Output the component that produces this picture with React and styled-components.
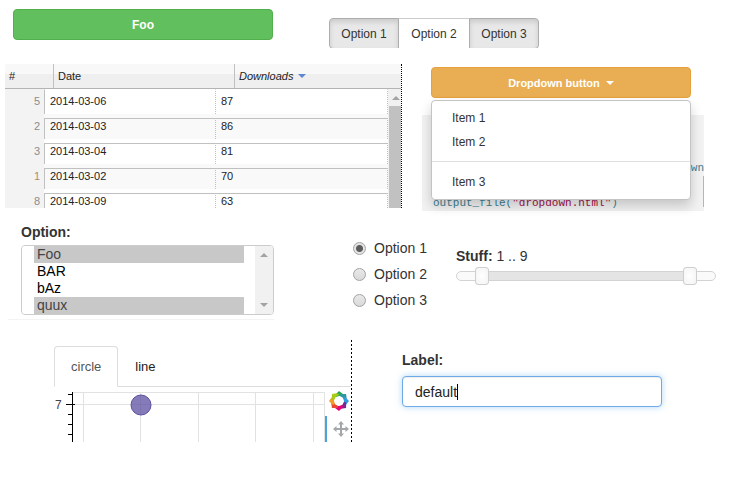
import React, { useState } from "react";
import styled, { createGlobalStyle } from "styled-components";

const GlobalStyle = createGlobalStyle`
  *, *::before, *::after { box-sizing: border-box; }
  body {
    margin: 0;
    background: #fff;
    color: #333;
    font-family: "Liberation Sans", Arial, sans-serif;
    font-size: 14px;
  }
  button, input, select { font-family: inherit; }
`;

const Page = styled.main`
  padding: 9px 0 36px;
`;

const Row = styled.section`
  display: grid;
  align-items: start;
  grid-template-columns: ${(p) => p.$columns};
  column-gap: ${(p) => p.$gap}px;
  padding-left: ${(p) => p.$indent}px;
  padding-right: ${(p) => p.$end || 0}px;
  margin-bottom: ${(p) => p.$after || 0}px;
`;

const SolidButton = styled.button`
  display: flex;
  align-items: center;
  justify-content: center;
  gap: 6px;
  width: 100%;
  height: 31px;
  padding: 0 12px;
  border: 1px solid ${(p) => (p.$tone === "success" ? "#52b04c" : "#e6a03c")};
  border-radius: 4px;
  background: ${(p) => (p.$tone === "success" ? "#62bf5d" : "#e9ae53")};
  color: #fff;
  font-size: ${(p) => (p.$tone === "success" ? 12 : 11)}px;
  font-weight: bold;
`;

const Caret = styled.span`
  border-top: 4px solid currentColor;
  border-left: 4px solid transparent;
  border-right: 4px solid transparent;
`;

const Group = styled.div`
  display: grid;
  grid-template-columns: 1fr 1fr 1fr;
  height: 30px;
  margin-top: 9px;
  overflow: hidden;
`;

const Segment = styled.button`
  height: 31px;
  padding: 0;
  border: 1px solid ${(p) => (p.$active ? "#adadad" : "#ccc")};
  border-left-width: ${(p) => (p.$first || p.$last ? 1 : 0)}px;
  border-right-width: ${(p) => (p.$first || p.$last ? 1 : 0)}px;
  border-radius: ${(p) => (p.$first ? "4px 0 0 4px" : p.$last ? "0 4px 4px 0" : "0")};
  background: ${(p) => (p.$active ? "#e8e8e8" : "#fff")};
  box-shadow: ${(p) => (p.$active ? "inset 0 3px 5px rgba(0, 0, 0, 0.125)" : "none")};
  color: #333;
  font-size: 12px;
`;

const GridFrame = styled.div`
  display: flex;
  flex-direction: column;
  height: 144px;
  overflow: hidden;
  border-right: 1px dotted #000;
  position: relative;
`;

const DataTable = styled.table`
  display: block;
  font-size: 11px;
  color: #222;
`;

const TableHead = styled.thead`
  display: block;
`;

const HeadRow = styled.tr`
  display: grid;
  grid-template-columns: 49fr 181fr 166fr;
  height: 25px;
  border-bottom: 1px solid #b4b4b4;
  background: linear-gradient(#f8f8f8 0 40%, #efeff0 42% 100%);
`;

const HeadCell = styled.th`
  display: flex;
  align-items: center;
  gap: 5px;
  padding: 0 4px;
  border-right: ${(p) => (p.$last ? 0 : 1)}px solid silver;
  font-weight: normal;
  font-style: ${(p) => (p.$sorted ? "italic" : "normal")};
`;

const SortArrow = styled.span`
  border-top: 4px solid #6085d0;
  border-left: 4px solid transparent;
  border-right: 4px solid transparent;
`;

const TableBody = styled.tbody`
  display: block;
  margin-right: 13px;
`;

const BodyRow = styled.tr`
  display: grid;
  grid-template-columns: 39fr 172fr 172fr;
  height: 25px;
  background: ${(p) => (p.$odd ? "#f9f9f9" : "#fff")};
`;

const IndexCell = styled.th`
  padding: 0 4px 0 0;
  background: #f3f3f3;
  color: ${(p) => (p.$warm ? "#b08a70" : "#8c8c8c")};
  font-weight: normal;
  line-height: 25px;
  text-align: right;
`;

const Cell = styled.td`
  margin-top: ${(p) => (p.$top ? 0 : 4)}px;
  padding: ${(p) => (p.$top ? 4 : 0)}px 5px 0;
  border-top: 1px solid ${(p) => (p.$top ? "transparent" : "silver")};
  border-left: ${(p) => (p.$leading ? 1 : 0)}px solid silver;
  border-right: 1px dotted silver;
  line-height: 15px;
`;

const ScrollTrack = styled.div`
  position: absolute;
  top: 25px;
  right: 0;
  bottom: 0;
  width: 13px;
  padding-left: 1px;
  background: #f1f1f1;
`;

const ScrollArrow = styled.svg`
  display: block;
  width: 12px;
  height: 17px;
  fill: #a3a3a3;
`;

const ScrollThumb = styled.div`
  height: 100%;
  background: #c1c1c1;
`;

const Dropdown = styled.div`
  position: relative;
  padding: 3px 13px 0 9px;
`;

const Menu = styled.ul`
  position: absolute;
  top: 36px;
  left: 9px;
  right: 13px;
  margin: 0;
  padding: 5px 0;
  list-style: none;
  border: 1px solid #c4c4c4;
  border-radius: 4px;
  background: #fff;
  box-shadow: 0 6px 12px rgba(0, 0, 0, 0.18);
`;

const MenuItem = styled.li`
  ${(p) => p.$divided && "margin-top: 7px; padding-top: 8px; border-top: 1px solid #e0e0e0;"}
`;

const MenuLink = styled.a`
  display: block;
  padding: 0 20px;
  color: #333;
  font-size: 12px;
  line-height: 24px;
  text-decoration: none;
`;

const CodeBlock = styled.pre`
  height: 96px;
  margin: 17px -13px 0 -9px;
  padding: 44px 0 0 11px;
  overflow: hidden;
  background: linear-gradient(#e9ae53, #e9ae53) right 61px / 1px 31px no-repeat, #f2f2f2;
  color: #408090;
  font-family: "Liberation Mono", monospace;
  font-size: 11px;
  line-height: 18px;
`;

const CodeLine = styled.code`
  display: block;
  font-family: inherit;
  text-align: ${(p) => (p.$end ? "right" : "left")};
  margin-bottom: ${(p) => (p.$end ? 17 : 0)}px;
`;

const CodeString = styled.span`
  color: #a0104a;
`;

const FieldLabel = styled.label`
  display: block;
  color: #333;
  font-weight: bold;
  line-height: 16px;
`;

const OptionPanel = styled.div`
  max-width: 266px;
  margin-left: -13px;
  padding-left: 13px;
  border-bottom: 1px solid #f3f3f3;
  height: 96px;
`;

const SelectFrame = styled.div`
  display: flex;
  width: 100%;
  height: 70px;
  margin-top: 5px;
  border: 1px solid #ccc;
  border-radius: 4px;
  overflow: hidden;
`;

const MultiSelect = styled.select`
  flex: 1;
  min-width: 0;
  height: 68px;
  margin: 0;
  padding: 0 11px 0 12px;
  border: 0;
  outline: 0;
  overflow: hidden;
  appearance: none;
  background: #fff;
  color: #000;
  font-size: 14px;
`;

const SelectOption = styled.option`
  height: 17px;
  min-height: 17px;
  padding: 0 3px;
  line-height: 17px;
  color: #000;
  &:checked {
    background: #c8c8c8 linear-gradient(#c8c8c8, #c8c8c8);
    color: #444;
    -webkit-text-fill-color: #444;
  }
`;

const SelectScroll = styled.svg`
  flex: none;
  width: 18px;
  height: 68px;
  background: #f1f1f1;
  fill: #a3a3a3;
`;

const RadioList = styled.fieldset`
  display: grid;
  gap: 10px;
  margin: 16px 0 0;
  padding: 0;
  border: 0;
  min-width: 0;
`;

const RadioLabel = styled.label`
  display: flex;
  align-items: center;
  gap: 8px;
  line-height: 16px;
  white-space: nowrap;
`;

const Radio = styled.input`
  appearance: none;
  flex: none;
  width: 13px;
  height: 13px;
  margin: 0;
  border: 1px solid #a2a2a2;
  border-radius: 50%;
  background: linear-gradient(#e9e9e9, #d9d9d9);
  &:checked {
    background: radial-gradient(circle, #5c5c5c 0 2px, #5c5c5c 3px, #e4e4e4 4px);
  }
`;

const SliderBlock = styled.div`
  margin-top: 24px;
`;

const SliderValue = styled.span`
  font-weight: normal;
`;

const Track = styled.div`
  position: relative;
  height: 10px;
  margin-top: 7px;
  border: 1px solid #d3d3d3;
  border-radius: 5px;
  background: linear-gradient(90deg, #fafafa 10%, #e4e4e4 10% 90%, #fafafa 90%);
`;

const Range = styled.input`
  position: absolute;
  left: -8px;
  top: -5px;
  width: calc(100% + 16px);
  height: 18px;
  margin: 0;
  appearance: none;
  background: transparent;
  pointer-events: none;
  &::-webkit-slider-thumb {
    appearance: none;
    width: 14px;
    height: 18px;
    border: 1px solid #cfcfcf;
    border-radius: 3px;
    background: radial-gradient(#fff, #f3f3f3);
    pointer-events: auto;
  }
`;

const PlotPanel = styled.div`
  height: 102px;
  padding-top: 6px;
  overflow: hidden;
  background: linear-gradient(#000 50%, transparent 50%) right top / 1px 4px repeat-y;
`;

const Tabs = styled.nav`
  display: flex;
  height: 41px;
  margin-right: 1px;
  border-bottom: 1px solid #ddd;
`;

const Tab = styled.button`
  height: 41px;
  padding: 0 16px;
  border: 1px solid ${(p) => (p.$active ? "#ddd" : "transparent")};
  border-bottom-color: ${(p) => (p.$active ? "#fff" : "transparent")};
  border-radius: 4px 4px 0 0;
  background: ${(p) => (p.$active ? "#fff" : "none")};
  color: ${(p) => (p.$active ? "#555" : "#222")};
  font-size: 13px;
`;

const PlotRow = styled.div`
  display: flex;
  margin-top: 5px;
`;

const Chart = styled.svg`
  flex: none;
  width: 271px;
  height: 50px;
  font-size: 12px;
`;

const Toolbar = styled.div`
  display: flex;
  flex-direction: column;
  gap: 5px;
  width: 26px;
`;

const ToolLogo = styled.svg`
  width: 20px;
  height: 20px;
  margin: -1px 0 0 4px;
`;

const ToolButton = styled.button`
  display: flex;
  height: 26px;
  padding: 5px 0 0 6px;
  border: 0;
  border-left: 2px solid #4ba3dc;
  background: none;
  color: #a4a7aa;
`;

const TextField = styled.div`
  padding-top: 12px;
`;

const InputFrame = styled.label`
  display: flex;
  align-items: center;
  height: 31px;
  margin-top: 8px;
  padding: 0 12px;
  border: 1px solid #6cabe8;
  border-radius: 4px;
  background: #fff;
  box-shadow: inset 0 1px 1px rgba(0, 0, 0, 0.075), 0 0 6px rgba(102, 175, 233, 0.5);
  cursor: text;
`;

const TextInput = styled.input`
  field-sizing: content;
  min-width: 1px;
  max-width: 100%;
  padding: 0;
  border: 0;
  outline: 0;
  background: none;
  color: #222;
  font-size: 14px;
`;

const TextCursor = styled.span`
  width: 1px;
  height: 16px;
  background: #000;
  input:focus + & { visibility: hidden; }
`;

const records = [
  [5, "2014-03-06", 87],
  [2, "2014-03-03", 86],
  [3, "2014-03-04", 81],
  [1, "2014-03-02", 70],
  [8, "2014-03-09", 63],
];

const petals = ["#26a65b", "#2a9aa0", "#2f9be0", "#80278f", "#e5007e", "#ea4630", "#f49b26", "#a8cb16"];

function ButtonGroup() {
  const [active, setActive] = useState([0, 2]);
  const toggle = (i) =>
    setActive(active.includes(i) ? active.filter((n) => n !== i) : [...active, i]);
  return (
    <Group>
      {["Option 1", "Option 2", "Option 3"].map((name, i) => (
        <Segment
          key={name}
          type="button"
          aria-pressed={active.includes(i)}
          $active={active.includes(i)}
          $first={i === 0}
          $last={i === 2}
          onClick={() => toggle(i)}
        >
          {name}
        </Segment>
      ))}
    </Group>
  );
}

function DownloadsTable() {
  return (
    <GridFrame>
      <DataTable>
        <TableHead>
          <HeadRow>
            <HeadCell>#</HeadCell>
            <HeadCell>Date</HeadCell>
            <HeadCell $last $sorted>Downloads <SortArrow /></HeadCell>
          </HeadRow>
        </TableHead>
        <TableBody>
          {records.map(([index, date, count], i) => (
            <BodyRow key={index} $odd={i % 2 === 1}>
              <IndexCell $warm={index === 1}>{index}</IndexCell>
              <Cell $top={i === 0} $leading>{date}</Cell>
              <Cell $top={i === 0}>{count}</Cell>
            </BodyRow>
          ))}
        </TableBody>
      </DataTable>
      <ScrollTrack>
        <ScrollArrow viewBox="0 0 12 17"><path d="M3 11l4-4 4 4z" /></ScrollArrow>
        <ScrollThumb />
      </ScrollTrack>
    </GridFrame>
  );
}

function DropdownDemo() {
  return (
    <Dropdown>
      <SolidButton type="button" $tone="warning">Dropdown button <Caret /></SolidButton>
      <CodeBlock>
        <CodeLine $end>wn</CodeLine>
        <CodeLine>output_file(<CodeString>"dropdown.html"</CodeString>)</CodeLine>
      </CodeBlock>
      <Menu>
        <MenuItem><MenuLink href="#item-1">Item 1</MenuLink></MenuItem>
        <MenuItem><MenuLink href="#item-2">Item 2</MenuLink></MenuItem>
        <MenuItem $divided><MenuLink href="#item-3">Item 3</MenuLink></MenuItem>
      </Menu>
    </Dropdown>
  );
}

function OptionSelect() {
  return (
    <OptionPanel>
      <FieldLabel htmlFor="options">Option:</FieldLabel>
      <SelectFrame>
        <MultiSelect id="options" multiple size={4} defaultValue={["Foo", "quux"]}>
          {["Foo", "BAR", "bAz", "quux"].map((name) => (
            <SelectOption key={name} value={name}>{name}</SelectOption>
          ))}
        </MultiSelect>
        <SelectScroll viewBox="0 0 18 68">
          <path d="M5 11l4-4 4 4zM5 57l4 4 4-4z" />
        </SelectScroll>
      </SelectFrame>
    </OptionPanel>
  );
}

function RangeSlider() {
  const [low, setLow] = useState(1);
  const [high, setHigh] = useState(9);
  return (
    <SliderBlock>
      <FieldLabel htmlFor="low">Stuff: <SliderValue>{low} .. {high}</SliderValue></FieldLabel>
      <Track>
        <Range id="low" type="range" min="0" max="10" value={low}
          onChange={(e) => setLow(Math.min(+e.target.value, high))} />
        <Range aria-label="Stuff, upper end" type="range" min="0" max="10" value={high}
          onChange={(e) => setHigh(Math.max(+e.target.value, low))} />
      </Track>
    </SliderBlock>
  );
}

function Plot() {
  const [tab, setTab] = useState("circle");
  return (
    <PlotPanel>
      <Tabs>
        {["circle", "line"].map((name) => (
          <Tab key={name} type="button" $active={tab === name} onClick={() => setTab(name)}>
            {name}
          </Tab>
        ))}
      </Tabs>
      <PlotRow>
        <Chart viewBox="0 0 271 50">
          <path d="M18 .5H270.5V50M29.5 0V50M86.5 0V50M144.5 0V50M201.5 0V50M259.5 0V50M18 12.5H270" fill="none" stroke="#e2e2e2" />
          <path d="M18.5 0V50M12 12.5H21M14 2.5H18M14 22.5H18M14 32.5H18M14 42.5H18" fill="none" stroke="#000" />
          <circle cx="87" cy="13" r="10" fill="#5e4fa2" fillOpacity="0.75" stroke="#5e4fa2" />
          <text x="1" y="17" fill="#444">7</text>
        </Chart>
        <Toolbar>
          <ToolLogo viewBox="-10 -10 20 20">
            {petals.map((color, i) => (
              <path key={color} d="M-4-6L0-10 4-7 5-4 2-5 0-5-3-4z" fill={color} transform={`rotate(${i * 45})`} />
            ))}
          </ToolLogo>
          <ToolButton type="button" aria-label="Pan">
            <svg width="16" height="16" viewBox="0 0 16 16">
              <path d="M8 2V14M2 8H14" stroke="currentColor" strokeWidth="2" />
              <path d="M8 0l3 3.500H5zM8 16l3-3.500H5zM0 8l3.500-3v6zM16 8l-3.500-3v6z" fill="currentColor" />
            </svg>
          </ToolButton>
        </Toolbar>
      </PlotRow>
    </PlotPanel>
  );
}

function LabelledInput() {
  const [value, setValue] = useState("default");
  return (
    <TextField>
      <FieldLabel htmlFor="text">Label:</FieldLabel>
      <InputFrame htmlFor="text">
        <TextInput id="text" type="text" value={value} onChange={(e) => setValue(e.target.value)} />
        <TextCursor />
      </InputFrame>
    </TextField>
  );
}

export default function App() {
  return (
    <Page>
      <GlobalStyle />
      <Row $columns="260fr 210fr 160fr" $gap={56} $indent={13} $after={16}>
        <SolidButton type="button" $tone="success">Foo</SolidButton>
        <ButtonGroup />
      </Row>
      <Row $columns="397fr 282fr 31fr" $gap={20} $indent={5} $after={13}>
        <DownloadsTable />
        <DropdownDemo />
      </Row>
      <Row $columns="302fr 73fr 260fr" $gap={30} $indent={21} $end={39} $after={20}>
        <OptionSelect />
        <RadioList>
          {["Option 1", "Option 2", "Option 3"].map((name, i) => (
            <RadioLabel key={name}>
              <Radio type="radio" name="choice" defaultChecked={i === 0} />
              {name}
            </RadioLabel>
          ))}
        </RadioList>
        <RangeSlider />
      </Row>
      <Row $columns="298fr 260fr 43fr" $gap={50} $indent={54}>
        <Plot />
        <LabelledInput />
      </Row>
    </Page>
  );
}
